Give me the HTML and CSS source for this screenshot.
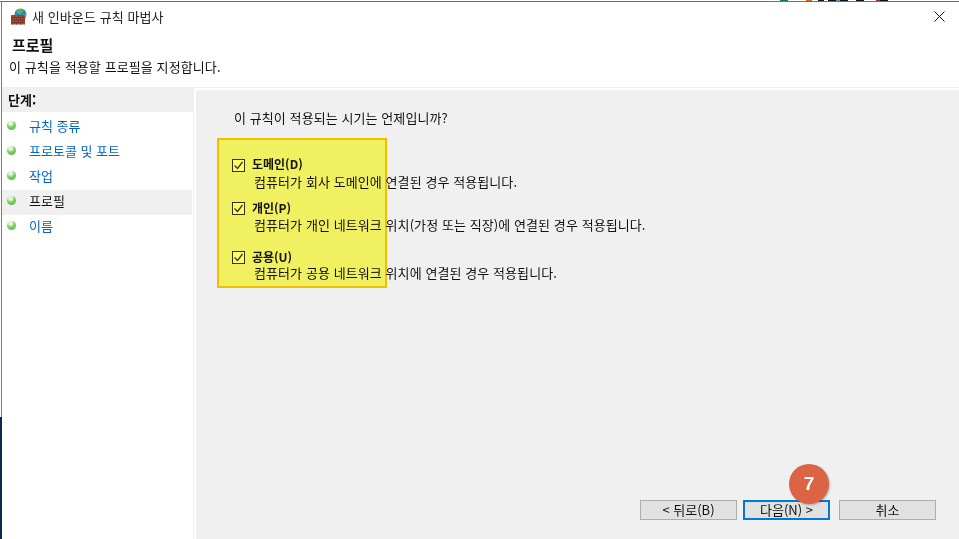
FILE: index.html
```html
<!DOCTYPE html>
<html lang="ko">
<head>
<meta charset="utf-8">
<title>새 인바운드 규칙 마법사</title>
<link rel="stylesheet" href="styles.css">
</head>
<body>
<div class="desktop-strip"></div>
<div class="window">
  <div class="titlebar">
    <svg class="app-icon" width="17" height="17" viewBox="0 0 17 17">
      <circle cx="10.500" cy="6.500" r="6" fill="#2a86d2"/>
      <path d="M7 2c2-1.500 5-1.200 6 .5l-1.500 3-3 .5-2-2z" fill="#62b83a"/>
      <path d="M13 7l3-1.500v3l-2 2z" fill="#62b83a"/>
      <path d="M1 7h14v9.500H1z" fill="#a34f3a"/>
      <path d="M1 9.500h14M1 12h14M1 14.500h14M4.500 7v2.500M8.500 7v2.500M12.500 7v2.500M2.500 9.500V12M6.500 9.500V12M10.500 9.500V12M14 9.500V12M4.500 12v2.500M8.500 12v2.500M12.500 12v2.500M2.500 14.500v2M6.500 14.500v2M10.500 14.500v2" stroke="#6d2f22" stroke-width=".7" fill="none"/>
    </svg>
    <span class="title-text">새 인바운드 규칙 마법사</span>
    <svg class="close-icon" width="11" height="11" viewBox="0 0 11 11">
      <path d="M.5.500l10 10M10.500.500l-10 10" stroke="#111" stroke-width="1" fill="none"/>
    </svg>
  </div>
  <header class="head">
    <h1>프로필</h1>
    <p>이 규칙을 적용할 프로필을 지정합니다.</p>
  </header>
  <div class="body">
    <aside class="side">
      <div class="steps-title">단계:</div>
      <ul class="steps">
        <li class="step"><i class="dot"></i><span>규칙 종류</span></li>
        <li class="step"><i class="dot"></i><span>프로토콜 및 포트</span></li>
        <li class="step"><i class="dot"></i><span>작업</span></li>
        <li class="step current"><i class="dot"></i><span>프로필</span></li>
        <li class="step"><i class="dot"></i><span>이름</span></li>
      </ul>
    </aside>
    <main class="main">
      <p class="question">이 규칙이 적용되는 시기는 언제입니까?</p>
      <div class="options">
        <div class="option opt-domain">
          <span class="check"><svg width="11" height="11" viewBox="0 0 11 11"><path d="M1.500 5.500l3 3 5-6.500" stroke="#333" stroke-width="1.300" fill="none"/></svg></span>
          <div class="option-text">
            <b>도메인(D)</b>
            <span>컴퓨터가 회사 도메인에 연결된 경우 적용됩니다.</span>
          </div>
        </div>
        <div class="option opt-private">
          <span class="check"><svg width="11" height="11" viewBox="0 0 11 11"><path d="M1.500 5.500l3 3 5-6.500" stroke="#333" stroke-width="1.300" fill="none"/></svg></span>
          <div class="option-text">
            <b>개인(P)</b>
            <span>컴퓨터가 개인 네트워크 위치(가정 또는 직장)에 연결된 경우 적용됩니다.</span>
          </div>
        </div>
        <div class="option opt-public">
          <span class="check"><svg width="11" height="11" viewBox="0 0 11 11"><path d="M1.500 5.500l3 3 5-6.500" stroke="#333" stroke-width="1.300" fill="none"/></svg></span>
          <div class="option-text">
            <b>공용(U)</b>
            <span>컴퓨터가 공용 네트워크 위치에 연결된 경우 적용됩니다.</span>
          </div>
        </div>
      </div>
      <div class="buttons">
        <button class="btn btn-back">&lt; 뒤로(B)</button>
        <button class="btn btn-next">다음(N) &gt;</button>
        <button class="btn btn-cancel">취소</button>
      </div>
    </main>
  </div>
</div>
<div class="highlight"></div>
<div class="badge">7</div>
</body>
</html>
```
FILE: styles.css
```css
* { box-sizing: border-box; }
html, body { margin: 0; padding: 0; }
body {
  width: 959px;
  height: 539px;
  overflow: hidden;
  position: relative;
  background:
    linear-gradient(90deg, #fff 1px, transparent 1px) 0 0 / 100% 417px no-repeat,
    linear-gradient(#7b7b7b 0 417px, #0d2a4c 417px);
  font-family: "Noto Sans CJK KR", "Noto Sans", sans-serif;
  font-size: 13px;
  color: #111;
  padding-left: 2px;
}
.desktop-strip {
  height: 2px;
  margin-left: -2px;
  border-bottom: 1px solid #6f6f6f;
  background: linear-gradient(90deg, #fff 0 780px, #127a7a 780px 788px, #fff 788px 806px, #c96a1c 806px 812px, #fff 812px 818px, #1a1a1a 818px 824px, #fff 824px 828px, #111 828px 836px, #5a9ad0 836px 840px, #111 840px 848px, #fff 848px 856px, #111 856px 864px, #fff 864px 876px, #8a2a6a 876px 880px, #111 880px 888px, #fff 888px);
}
.window {
  width: 957px;
  height: 537px;
  background: #fff;
  display: flex;
  flex-direction: column;
}
.titlebar {
  height: 29px;
  flex: none;
  display: flex;
  align-items: center;
  padding: 0 14px 0 8px;
}
.app-icon { margin-right: 5px; }
.title-text { flex: 1; color: #222; letter-spacing: .08px; }
.head {
  height: 57px;
  flex: none;
  padding: 4px 0 0 8px;
  border-bottom: 1px solid #f0f0f0;
}
.head h1 {
  margin: 0;
  font-size: 15px;
  font-weight: 700;
  line-height: 20px;
  padding-left: 2px;
}
.head p {
  margin: 3px 0 0 -1px;
  line-height: 18px;
  letter-spacing: .1px;
}
.body { flex: 1; display: flex; min-height: 0; }
.side {
  width: 192px;
  flex: none;
  border-right: 1px solid #f0f0f0;
  border-top: 2px solid #f0f0f0;
}
.steps-title {
  height: 22px;
  background: #f0f0f0;
  font-weight: 700;
  line-height: 19px;
  padding-left: 6px;
}
.steps { list-style: none; margin: 3px 0 0; padding: 0 1px 0 0; }
.step {
  height: 25px;
  display: flex;
  align-items: center;
  color: #0066cc;
  padding: 0 0 4px 5px;
}
.step.current { color: #111; background: #f0f0f0; }
.dot {
  width: 9px;
  height: 9px;
  flex: none;
  border-radius: 50%;
  margin-right: 13px;
  background: radial-gradient(circle at 40% 25%, #e8f2e4 0 18%, #7ed160 45%, #49b52c 100%);
}
.main {
  flex: 1;
  background: #f0f0f0;
  margin: 2px 0 0 2px;
  position: relative;
  display: flex;
  flex-direction: column;
  padding: 19px 23px 19px 38px;
}
.question { margin: 0; line-height: 18px; letter-spacing: .08px; }
.options { flex: 1; display: flex; flex-direction: column; }
.option { display: flex; align-items: flex-start; }
.opt-domain { margin-top: 28px; }
.opt-private { margin-top: 8px; }
.opt-public { margin-top: 16px; }
.check {
  width: 13px;
  height: 13px;
  flex: none;
  margin: 4px 7px 0 -2px;
  border: 1px solid #333;
  background: #fff;
  display: flex;
  align-items: center;
  justify-content: center;
}
.opt-private .check { margin-top: 3px; }
.opt-public .check { margin-top: 2px; }
.option-text { display: flex; flex-direction: column; line-height: 18px; }
.opt-private .option-text { line-height: 17px; }
.opt-public .option-text { line-height: 16px; }
.option-text b { font-weight: 700; font-size: 12px; }
.option-text span { padding-left: 2px; letter-spacing: .08px; }
.buttons { display: flex; justify-content: flex-end; }
.btn {
  height: 20px;
  padding: 0;
  font: inherit;
  color: #111;
  background: #e1e1e1;
  border: 1px solid #adadad;
  border-radius: 0;
  line-height: 16px;
  margin-left: 6px;
}
.btn-back { width: 97px; }
.btn-next { width: 87px; border: 2px solid #0078d7; }
.btn-cancel { width: 97px; margin-left: 9px; }
.highlight {
  position: absolute;
  left: 217px;
  top: 138px;
  width: 170px;
  height: 150px;
  border: 2px solid #ffcc00;
  background: #ffff66;
  mix-blend-mode: multiply;
}
.badge {
  position: absolute;
  left: 789px;
  top: 464px;
  width: 40px;
  height: 40px;
  border-radius: 50%;
  background: #db6444;
  color: #fff;
  font-family: "Liberation Sans", sans-serif;
  font-weight: 700;
  font-size: 19px;
  display: flex;
  align-items: center;
  justify-content: center;
  box-shadow: 1px 1px 2px rgba(0,0,0,.25);
}
```
